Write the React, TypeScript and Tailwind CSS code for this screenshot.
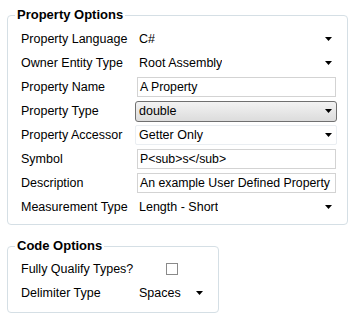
const font = { fontFamily: '"Liberation Sans", Arial, sans-serif' };

function Arrow() {
  return (
    <svg width="7" height="4" viewBox="0 0 7 4" className="shrink-0">
      <polygon points="0,0 7,0 3.5,4" fill="#000" />
    </svg>
  );
}

function Row({ label, children }: { label: string; children: React.ReactNode }) {
  return (
    <div className="flex h-6 items-center">
      <div className="w-[114px] shrink-0 whitespace-nowrap text-[12.5px] text-black">{label}</div>
      <div className="flex h-full min-w-0 flex-1 items-center">{children}</div>
    </div>
  );
}

function Dropdown({ value }: { value: string }) {
  return (
    <div className="flex h-[21px] w-full items-center justify-between pl-[4px] pr-[5px] text-[12.5px] text-black">
      <span className="truncate">{value}</span>
      <Arrow />
    </div>
  );
}

function TextBox({ value }: { value: string }) {
  return (
    <div className="ml-[2px] mr-[1px] flex h-[20px] w-full items-center overflow-hidden whitespace-nowrap border border-[#d3d3d3] bg-white pl-[2px] text-[12.3px] text-black">
      {value}
    </div>
  );
}

export default function App() {
  return (
    <div className="min-h-screen bg-white pl-[7px] pt-[7px]" style={font}>
      {/* Property Options group */}
      <fieldset className="w-[341px] rounded-[4px] border border-[#d5dfe5] pb-[5px] pl-[13px] pr-[10px] pt-[4px]">
        <legend className="ml-[-6px] px-[2px] text-[13px] font-bold leading-4 text-black">Property Options</legend>
        <Row label="Property Language">
          <Dropdown value="C#" />
        </Row>
        <Row label="Owner Entity Type">
          <Dropdown value="Root Assembly" />
        </Row>
        <Row label="Property Name">
          <TextBox value="A Property" />
        </Row>
        <Row label="Property Type">
          <div className="flex h-[21px] w-full items-center justify-between rounded-[3px] border border-[#707070] bg-gradient-to-b from-[#f3f3f3] to-[#dcdcdc] pl-[3px] pr-[4px] text-[12.5px] text-black">
            <span>double</span>
            <Arrow />
          </div>
        </Row>
        <Row label="Property Accessor">
          <div className="flex h-[20px] w-full items-center justify-between rounded-[2px] border border-[#eaeef2] pl-[3px] pr-[4px] text-[12.5px] text-black">
            <span>Getter Only</span>
            <Arrow />
          </div>
        </Row>
        <Row label="Symbol">
          <TextBox value="P<sub>s</sub>" />
        </Row>
        <Row label="Description">
          <TextBox value="An example User Defined Property" />
        </Row>
        <Row label="Measurement Type">
          <Dropdown value="Length - Short" />
        </Row>
      </fieldset>

      {/* Code Options group */}
      <fieldset className="mt-[13px] w-[212px] rounded-[4px] border border-[#d5dfe5] pb-[7px] pl-[13px] pr-[10px] pt-[3px]">
        <legend className="ml-[-6px] px-[2px] text-[13px] font-bold leading-4 text-black">Code Options</legend>
        <Row label="Fully Qualify Types?">
          <div className="flex w-full justify-center">
            <div className="h-[12px] w-[12px] border border-[#8a8a8a] bg-white" />
          </div>
        </Row>
        <Row label="Delimiter Type">
          <Dropdown value="Spaces" />
        </Row>
      </fieldset>
    </div>
  );
}
